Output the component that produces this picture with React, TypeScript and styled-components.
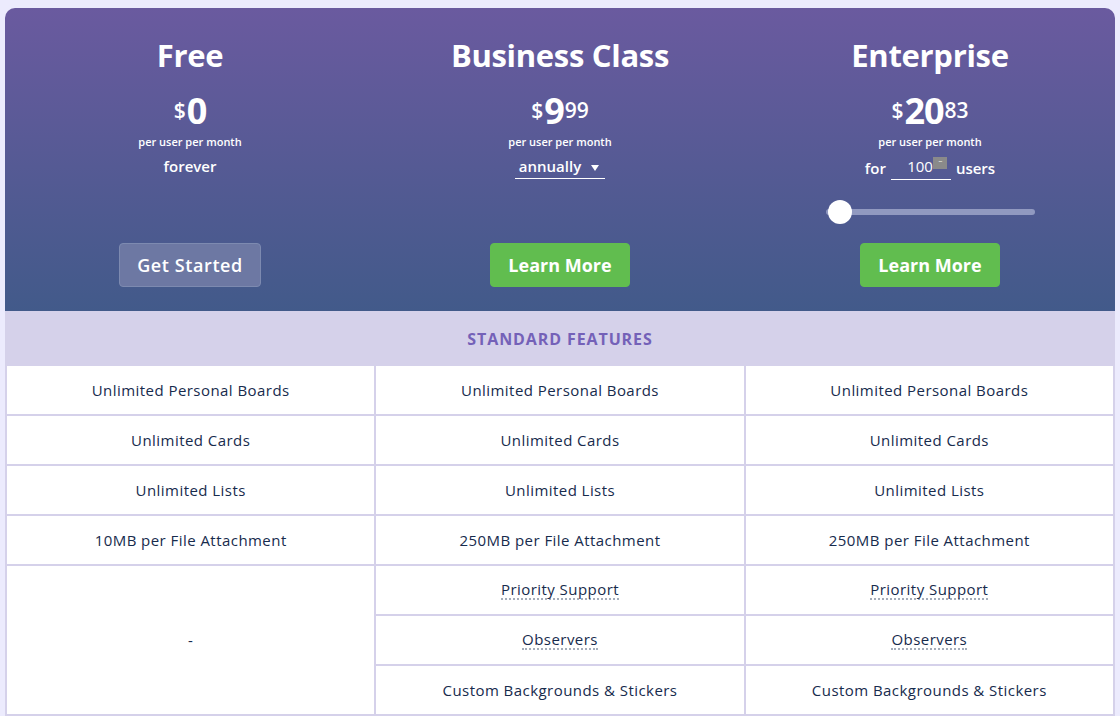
import React from "react";
import styled, { createGlobalStyle } from "styled-components";

const Global = createGlobalStyle`
  html, body { margin: 0; padding: 0; background: #ecebfd; }
  body { font-family: "Open Sans", "Noto Sans", sans-serif; }
  * { box-sizing: border-box; }
`;

const Page = styled.div`
  width: 1120px;
  height: 716px;
  padding: 8px 5px 0 5px;
  overflow: hidden;
`;

const Card = styled.div`
  width: 1110px;
  border-radius: 10px 10px 0 0;
  overflow: hidden;
`;

const Header = styled.div`
  height: 303px;
  display: grid;
  grid-template-columns: repeat(3, 1fr);
  background: linear-gradient(180deg, #6a5a9f 0%, #425a8a 100%);
  color: #fff;
`;

const Plan = styled.div`
  display: flex;
  flex-direction: column;
  align-items: center;
  padding: 27px 0 24px;
`;

const Title = styled.h2`
  margin: 0;
  font-size: 31px;
  line-height: 40px;
  font-weight: 700;
  letter-spacing: -0.3px;
`;

const Price = styled.div`
  display: flex;
  align-items: flex-start;
  margin-top: 16px;
  height: 40px;
  font-weight: 700;
`;

const Dollar = styled.span`
  font-size: 21px;
  line-height: 21px;
  font-weight: 600;
  margin-top: 9px;
  margin-right: 1px;
`;

const Amount = styled.span`
  font-size: 36px;
  line-height: 40px;
  letter-spacing: -1px;
`;

const Cents = styled.span`
  font-size: 21px;
  line-height: 21px;
  font-weight: 600;
  margin-top: 9px;
  margin-left: 1px;
`;

const PerUser = styled.div`
  margin-top: 3px;
  font-size: 11px;
  line-height: 16px;
  font-weight: 600;
`;

const Extra = styled.div`
  margin-top: 5px;
  font-size: 15px;
  line-height: 22px;
  font-weight: 600;
  display: flex;
  align-items: center;
  gap: 5px;
`;

const Select = styled.div`
  display: flex;
  align-items: center;
  gap: 10px;
  padding: 0 6px 1px 4px;
  border-bottom: 1px solid #fff;
  font-size: 15px;
  font-weight: 600;
`;

const Caret = styled.span`
  width: 0;
  height: 0;
  border-left: 4px solid transparent;
  border-right: 4px solid transparent;
  border-top: 6px solid #fff;
  margin-top: 3px;
`;

const UsersInput = styled.div`
  width: 60px;
  display: flex;
  justify-content: flex-end;
  align-items: flex-start;
  border-bottom: 1px solid #fff;
  padding: 0 4px 2px 0;
  font-size: 15px;
  font-weight: 500;
`;

const Spin = styled.span`
  width: 14px;
  height: 12px;
  margin-top: 2px;
  background: #8a8a8a;
  color: #fff;
  font-size: 8px;
  line-height: 8px;
  letter-spacing: -1px;
  text-align: center;
`;

const Slider = styled.div`
  position: relative;
  width: 209px;
  height: 6px;
  margin-top: 29px;
  border-radius: 3px;
  background: #9199c0;
`;

const Thumb = styled.span`
  position: absolute;
  left: 2px;
  top: -9px;
  width: 24px;
  height: 24px;
  border-radius: 50%;
  background: #fff;
`;

const Spacer = styled.div`
  flex: 1;
`;

const Button = styled.button<{ $variant: "ghost" | "green" }>`
  height: 44px;
  padding: 0 ${(p) => (p.$variant === "green" ? "17px" : "17px")};
  border-radius: 4px;
  font-family: inherit;
  font-size: 18px;
  color: #fff;
  cursor: pointer;
  border: 1px solid ${(p) => (p.$variant === "green" ? "#61bd4f" : "#7d8ab0")};
  background: ${(p) => (p.$variant === "green" ? "#61bd4f" : "#6d78a3")};
  font-weight: ${(p) => (p.$variant === "green" ? 700 : 600)};
  letter-spacing: ${(p) => (p.$variant === "green" ? "0" : "0.6px")};
`;

const Band = styled.div`
  height: 55px;
  display: flex;
  align-items: center;
  justify-content: center;
  background: #d5d1ea;
  color: #7461b8;
  font-size: 16px;
  font-weight: 700;
  letter-spacing: 0.9px;
`;

const Table = styled.div`
  display: grid;
  grid-template-columns: repeat(3, 1fr);
  grid-auto-rows: 48px;
  gap: 2px;
  padding: 0 2px 2px;
  background: #d5d1ea;
`;

const Cell = styled.div<{ $span?: number }>`
  background: #fff;
  display: flex;
  align-items: center;
  justify-content: center;
  color: #172b4d;
  font-size: 15px;
  font-weight: 500;
  letter-spacing: 0.45px;
  grid-row: ${(p) => (p.$span ? `span ${p.$span}` : "auto")};
`;

const Tip = styled.span`
  border-bottom: 2px dotted #a5adba;
  line-height: 18px;
`;

type Row = { text: string; tip?: boolean };

const rows: { free: string; biz: string; ent: string }[] = [
  { free: "Unlimited Personal Boards", biz: "Unlimited Personal Boards", ent: "Unlimited Personal Boards" },
  { free: "Unlimited Cards", biz: "Unlimited Cards", ent: "Unlimited Cards" },
  { free: "Unlimited Lists", biz: "Unlimited Lists", ent: "Unlimited Lists" },
  { free: "10MB per File Attachment", biz: "250MB per File Attachment", ent: "250MB per File Attachment" },
];

const extras: Row[] = [
  { text: "Priority Support", tip: true },
  { text: "Observers", tip: true },
  { text: "Custom Backgrounds & Stickers" },
];

export default function App() {
  return (
    <Page>
      <Global />
      <Card>
        <Header>
          <Plan>
            <Title>Free</Title>
            <Price>
              <Dollar>$</Dollar>
              <Amount>0</Amount>
            </Price>
            <PerUser>per user per month</PerUser>
            <Extra>forever</Extra>
            <Spacer />
            <Button $variant="ghost">Get Started</Button>
          </Plan>
          <Plan>
            <Title>Business Class</Title>
            <Price>
              <Dollar>$</Dollar>
              <Amount>9</Amount>
              <Cents>99</Cents>
            </Price>
            <PerUser>per user per month</PerUser>
            <Extra>
              <Select>
                annually <Caret />
              </Select>
            </Extra>
            <Spacer />
            <Button $variant="green">Learn More</Button>
          </Plan>
          <Plan>
            <Title>Enterprise</Title>
            <Price>
              <Dollar>$</Dollar>
              <Amount>20</Amount>
              <Cents>83</Cents>
            </Price>
            <PerUser>per user per month</PerUser>
            <Extra>
              <span>for</span>
              <UsersInput>
                100<Spin>···</Spin>
              </UsersInput>
              <span>users</span>
            </Extra>
            <Slider>
              <Thumb />
            </Slider>
            <Spacer />
            <Button $variant="green">Learn More</Button>
          </Plan>
        </Header>
        <Band>STANDARD FEATURES</Band>
        <Table>
          {rows.map((r, i) => (
            <React.Fragment key={i}>
              <Cell>{r.free}</Cell>
              <Cell>{r.biz}</Cell>
              <Cell>{r.ent}</Cell>
            </React.Fragment>
          ))}
          {extras.map((e, i) => (
            <React.Fragment key={`x${i}`}>
              {i === 0 && <Cell $span={3}>-</Cell>}
              <Cell>{e.tip ? <Tip>{e.text}</Tip> : e.text}</Cell>
              <Cell>{e.tip ? <Tip>{e.text}</Tip> : e.text}</Cell>
            </React.Fragment>
          ))}
        </Table>
      </Card>
    </Page>
  );
}
